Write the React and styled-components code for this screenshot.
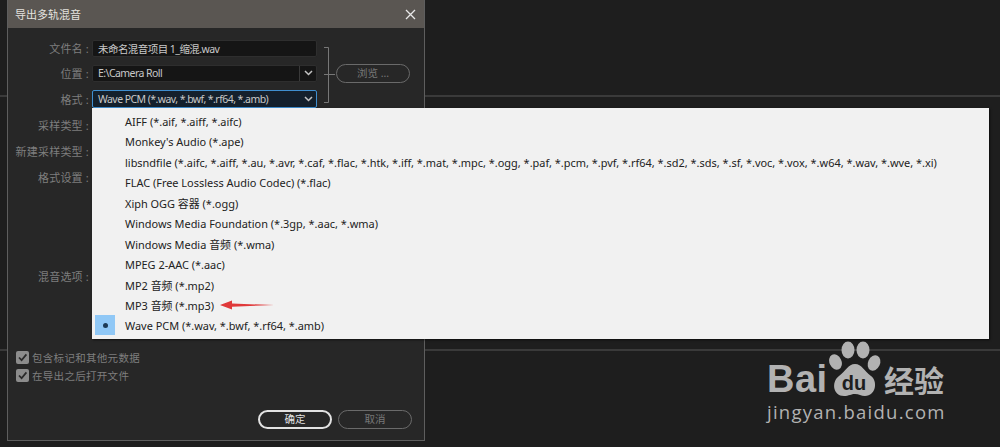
import React from 'react';
import styled, { createGlobalStyle } from 'styled-components';

const GlobalStyle = createGlobalStyle`
  html, body { margin: 0; padding: 0; background: #1e1e1e; overflow: hidden; }
  body { font-family: "Noto Sans", "Noto Sans CJK SC", sans-serif; }
`;

const Desktop = styled.div`
  position: relative;
  width: 1000px;
  height: 447px;
  padding-left: 7px;
  box-sizing: border-box;
  background:
    linear-gradient(#3a3a3a, #3a3a3a) 0 95px / 100% 2px no-repeat,
    linear-gradient(#3a3a3a, #3a3a3a) 0 349px / 100% 2px no-repeat,
    #1e1e1e;
`;

const Dialog = styled.div`
  position: relative;
  width: 418px;
  height: 441px;
  box-sizing: border-box;
  border: 1px solid #5e5e5e;
  border-top: 0;
  background: #272727;
  display: flex;
  flex-direction: column;
`;

const TitleBar = styled.div`
  height: 28px;
  flex: none;
  background: #5a5652;
  color: #e4e2df;
  font-size: 11px;
  display: flex;
  align-items: center;
  justify-content: space-between;
  padding: 0 8px 0 7px;
`;

const Form = styled.div`
  padding-top: 11px;
  display: flex;
  flex-direction: column;
  position: relative;
`;

const Row = styled.div`
  display: flex;
  align-items: center;
  height: ${p => p.$h || 18}px;
  margin-top: ${p => p.$mt || 0}px;
`;

const Label = styled.div`
  width: 81px;
  flex: none;
  text-align: right;
  font-size: 11px;
  color: #7e7e7e;
  letter-spacing: 0.2px;
  white-space: nowrap;
`;

const Field = styled.div`
  margin-left: 3px;
  width: 225px;
  height: ${p => (p.$focus ? 18 : 17)}px;
  box-sizing: border-box;
  border-radius: 2px;
  border: 1px solid ${p => (p.$focus ? '#3f8fd0' : '#2e2e2e')};
  color: #c8c8c8;
  font-size: 10.5px;
  letter-spacing: -0.55px;
  display: flex;
  align-items: center;
  padding-left: 5px;
  white-space: nowrap;
  overflow: hidden;
  background-color: ${p => (p.$focus ? '#14202c' : '#151515')};
`;

const FieldText = styled.span`
  flex: 1;
`;

const Chevron = styled.div`
  width: 16px;
  height: 100%;
  flex: none;
  display: flex;
  align-items: center;
  justify-content: center;
  border-left: ${p => (p.$split ? '1px solid #3a3a3a' : '0')};
`;

const Bracket = styled.svg`
  position: absolute;
  left: 315px;
  top: 19px;
`;

const PillButton = styled.button`
  width: 74px;
  height: 19px;
  box-sizing: border-box;
  border-radius: 10px;
  background: transparent;
  border: ${p => (p.$primary ? '2px solid #e2e2e2' : '1.5px solid #6a6a6a')};
  color: ${p => (p.$primary ? '#e2e2e2' : '#777')};
  font-family: inherit;
  font-size: 10.5px;
  padding: 0;
  line-height: 1;
`;

const BrowseButton = styled(PillButton)`
  position: absolute;
  left: 328px;
  top: 36px;
`;

const Checks = styled.div`
  margin: 61px 0 0 8px;
  display: flex;
  flex-direction: column;
  gap: 4px;
`;

const CheckRow = styled.div`
  display: flex;
  align-items: center;
  gap: 3px;
  height: 14px;
  font-size: 10.5px;
  letter-spacing: 0.3px;
  color: #7e7e7e;
`;

const CheckBox = styled.span`
  width: 13px;
  height: 13px;
  border-radius: 2px;
  background: #8c8c8c;
  display: flex;
  align-items: center;
  justify-content: center;
`;

const Footer = styled.div`
  margin-top: auto;
  padding: 0 12px 11px 0;
  display: flex;
  justify-content: flex-end;
  gap: 6px;
`;

const CloseIcon = styled.svg`
  display: block;
`;

const Menu = styled.div`
  position: absolute;
  left: 84px;
  top: 108px;
  width: 897px;
  height: 231px;
  box-sizing: border-box;
  padding-top: 3px;
  background: #f1f1f1;
  box-shadow: 1px 1px 2px rgba(0, 0, 0, 0.6);
  z-index: 2;
`;

const MenuItem = styled.div`
  position: relative;
  height: 20.45px;
  display: flex;
  align-items: center;
  padding-left: 33px;
  font-size: 10.95px;
  color: #222;
  white-space: nowrap;
`;

const RadioMark = styled.span`
  position: absolute;
  left: 3px;
  top: 0;
  width: 20px;
  height: 20px;
  background: #90c8f6;
  display: flex;
  align-items: center;
  justify-content: center;
  &::before {
    content: '';
    width: 5px;
    height: 5px;
    border-radius: 50%;
    background: #1d3a55;
  }
`;

const Arrow = styled.svg`
  margin-left: 6px;
  flex: none;
`;

const Watermark = styled.div`
  position: absolute;
  left: 767px;
  top: 340px;
  width: 182px;
  height: 86px;
  color: #b2b2b2;
`;

const BaiText = styled.span`
  position: absolute;
  left: 0;
  top: 17px;
  font-family: "Liberation Sans", sans-serif;
  font-weight: 700;
  font-size: 38px;
  line-height: 44px;
  letter-spacing: 0.5px;
`;

const DuText = styled.span`
  position: absolute;
  left: 69px;
  top: 32px;
  width: 36px;
  text-align: center;
  font-family: "Liberation Sans", sans-serif;
  font-weight: 700;
  font-size: 20px;
  line-height: 22px;
  color: #1e1e1e;
`;

const JingText = styled.span`
  position: absolute;
  left: 117px;
  top: 21px;
  font-family: "Noto Sans CJK SC", sans-serif;
  font-weight: 700;
  font-size: 30px;
  line-height: 36px;
  white-space: nowrap;
`;

const SiteText = styled.span`
  position: absolute;
  left: 0;
  top: 59px;
  font-family: "Open Sans", sans-serif;
  font-size: 18.5px;
  line-height: 26px;
  letter-spacing: 1.25px;
  white-space: nowrap;
`;

const Paw = styled.svg`
  position: absolute;
  left: 61px;
  top: 0;
`;

const formats = [
  'AIFF (*.aif, *.aiff, *.aifc)',
  "Monkey's Audio (*.ape)",
  'libsndfile (*.aifc, *.aiff, *.au, *.avr, *.caf, *.flac, *.htk, *.iff, *.mat, *.mpc, *.ogg, *.paf, *.pcm, *.pvf, *.rf64, *.sd2, *.sds, *.sf, *.voc, *.vox, *.w64, *.wav, *.wve, *.xi)',
  'FLAC (Free Lossless Audio Codec) (*.flac)',
  'Xiph OGG 容器 (*.ogg)',
  'Windows Media Foundation (*.3gp, *.aac, *.wma)',
  'Windows Media 音频 (*.wma)',
  'MPEG 2-AAC (*.aac)',
  'MP2 音频 (*.mp2)',
  'MP3 音频 (*.mp3)',
  'Wave PCM (*.wav, *.bwf, *.rf64, *.amb)',
];

const ChevronIcon = () => (
  <svg width="9" height="6" viewBox="0 0 9 6">
    <path d="M1 1 L4.5 4.5 L8 1" fill="none" stroke="#c4c4c4" strokeWidth="1.5" />
  </svg>
);

const Tick = () => (
  <svg width="11" height="11" viewBox="0 0 11 11">
    <path d="M2 5.5 L4.6 8.2 L9.4 2.4" fill="none" stroke="#2a2a2a" strokeWidth="1.8" />
  </svg>
);

const App = () => (
  <Desktop>
    <GlobalStyle />
    <Dialog>
      <TitleBar>
        <span>导出多轨混音</span>
        <CloseIcon width="11" height="11" viewBox="0 0 11 11">
          <path d="M1 1 L10 10 M10 1 L1 10" stroke="#e8e8e8" strokeWidth="1.3" />
        </CloseIcon>
      </TitleBar>

      <Form>
        <Row>
          <Label>文件名 :</Label>
          <Field>未命名混音项目 1_缩混.wav</Field>
        </Row>
        <Row $mt={7}>
          <Label>位置 :</Label>
          <Field>
            <FieldText>E:\Camera Roll</FieldText>
            <Chevron $split><ChevronIcon /></Chevron>
          </Field>
        </Row>
        <Row $mt={8}>
          <Label>格式 :</Label>
          <Field $focus>
            <FieldText>Wave PCM (*.wav, *.bwf, *.rf64, *.amb)</FieldText>
            <Chevron><ChevronIcon /></Chevron>
          </Field>
        </Row>
        <Row $h={26} $mt={4}><Label>采样类型 :</Label></Row>
        <Row $h={26}><Label>新建采样类型 :</Label></Row>
        <Row $h={26}><Label>格式设置 :</Label></Row>
        <Row $h={26} $mt={73}><Label>混音选项 :</Label></Row>

        <Bracket width="14" height="56" viewBox="0 0 14 56">
          <path d="M1 .5 H5.500 V55.500 H1 M1 27.500 H12" fill="none" stroke="#777" strokeWidth="1" />
        </Bracket>
        <BrowseButton type="button">浏览 ...</BrowseButton>
      </Form>

      <Checks>
        <CheckRow><CheckBox><Tick /></CheckBox>包含标记和其他元数据</CheckRow>
        <CheckRow><CheckBox><Tick /></CheckBox>在导出之后打开文件</CheckRow>
      </Checks>

      <Footer>
        <PillButton type="button" $primary>确定</PillButton>
        <PillButton type="button">取消</PillButton>
      </Footer>

      <Menu>
        {formats.map((name, i) => (
          <MenuItem key={name}>
            {i === formats.length - 1 && <RadioMark />}
            {name}
            {name.startsWith('MP3') && (
              <Arrow width="54" height="10" viewBox="0 0 54 10">
                <path d="M0 5 L12 0.5 L12 3.6 L54 5 L12 6.8 L12 9.5 Z" fill="#e0393a" />
              </Arrow>
            )}
          </MenuItem>
        ))}
      </Menu>
    </Dialog>

    <Watermark>
      <BaiText>Bai</BaiText>
      <Paw width="56" height="58" viewBox="0 0 56 58">
        <ellipse cx="20" cy="10" rx="6.500" ry="8.500" fill="currentColor" />
        <ellipse cx="35" cy="10" rx="6.500" ry="8.500" fill="currentColor" />
        <ellipse cx="7.500" cy="22" rx="6" ry="8" transform="rotate(-25 7.500 22)" fill="currentColor" />
        <ellipse cx="46" cy="23" rx="6" ry="8" transform="rotate(25 46 23)" fill="currentColor" />
        <path d="M27 24 C34 24 36 31 43 36 C50 41 48 56 37 56 C33 56 31 54 27 54 C23 54 21 56 16 56 C5 56 3 42 11 36 C18 31 20 24 27 24 Z" fill="currentColor" />
      </Paw>
      <DuText>du</DuText>
      <JingText>经验</JingText>
      <SiteText>jingyan.baidu.com</SiteText>
    </Watermark>
  </Desktop>
);

export default App;
